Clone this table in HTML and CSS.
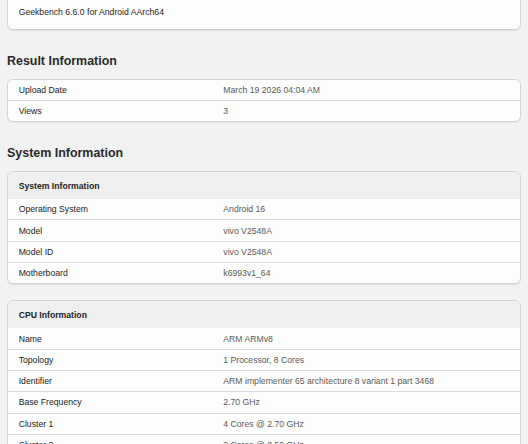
FILE: index.html
```html
<!DOCTYPE html>
<html>
<head>
<meta charset="utf-8">
<link rel="stylesheet" href="styles.css">
</head>
<body>
<div class="page">
  <div class="card top-card">Geekbench 6.6.0 for Android AArch64</div>

  <h2 class="section-title">Result Information</h2>
  <div class="card">
    <div class="row"><span class="label">Upload Date</span><span class="value">March 19 2026 04:04 AM</span></div>
    <div class="row"><span class="label">Views</span><span class="value">3</span></div>
  </div>

  <h2 class="section-title">System Information</h2>
  <div class="card">
    <div class="card-head">System Information</div>
    <div class="row"><span class="label">Operating System</span><span class="value">Android 16</span></div>
    <div class="row"><span class="label">Model</span><span class="value">vivo V2548A</span></div>
    <div class="row"><span class="label">Model ID</span><span class="value">vivo V2548A</span></div>
    <div class="row"><span class="label">Motherboard</span><span class="value">k6993v1_64</span></div>
  </div>

  <div class="card card-gap">
    <div class="card-head">CPU Information</div>
    <div class="row"><span class="label">Name</span><span class="value">ARM ARMv8</span></div>
    <div class="row"><span class="label">Topology</span><span class="value">1 Processor, 8 Cores</span></div>
    <div class="row"><span class="label">Identifier</span><span class="value">ARM implementer 65 architecture 8 variant 1 part 3468</span></div>
    <div class="row"><span class="label">Base Frequency</span><span class="value">2.70 GHz</span></div>
    <div class="row"><span class="label">Cluster 1</span><span class="value">4 Cores @ 2.70 GHz</span></div>
    <div class="row"><span class="label">Cluster 2</span><span class="value">2 Cores @ 2.50 GHz</span></div>
    <div class="row"><span class="label">Cluster 3</span><span class="value">2 Cores @ 2.00 GHz</span></div>
  </div>
</div>
</body>
</html>
```

FILE: styles.css
```css
html, body {
  margin: 0;
  padding: 0;
  background: #f2f2f2;
  overflow: hidden;
}

body {
  font-family: "Liberation Sans", Arial, sans-serif;
  font-size: 8.67px;
  color: #222;
}

.page {
  padding: 0 7px 0 7px;
}

.card {
  background: #fdfdfd;
  border: 1px solid #d2d2d2;
  border-radius: 6px;
  box-shadow: 0 1px 1px rgba(0, 0, 0, 0.07);
  overflow: hidden;
}

.top-card {
  margin-top: -6px;
  padding: 11px 10.67px 10px;
  line-height: 13px;
  color: #1e1e1e;
}

.section-title {
  margin: 22.7px 0 10px;
  font-size: 12.44px;
  line-height: 16px;
  font-weight: bold;
  color: #2a2a2a;
}

.card-head {
  height: 27px;
  display: flex;
  align-items: center;
  padding-left: 10.67px;
  background: #efefef;
  font-weight: bold;
  color: #222;
}

.row {
  box-sizing: border-box;
  height: 21.33px;
  display: grid;
  grid-template-columns: 204.67px 1fr;
  align-items: center;
  padding-left: 10.67px;
  border-bottom: 1px solid #dcdcdc;
}

.row:last-child {
  height: 20.33px;
  border-bottom: none;
}

.label {
  color: #222;
}

.value {
  color: #5a5a5a;
}

.card-gap {
  margin-top: 16px;
}
```
